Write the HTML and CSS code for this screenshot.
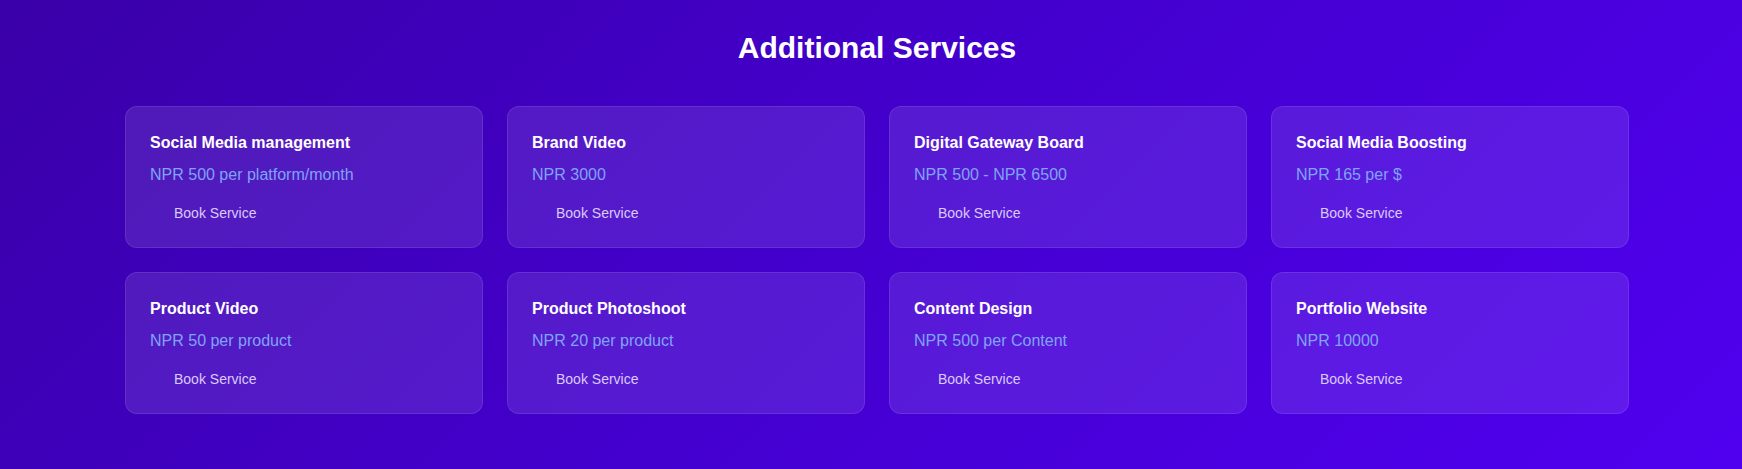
FILE: index.html
```html
<!DOCTYPE html>
<html lang="en">
<head>
<meta charset="utf-8">
<title>Additional Services</title>
<link rel="stylesheet" href="styles.css">
</head>
<body>
<section class="services">
  <h2 class="services-title">Additional Services</h2>
  <div class="services-grid">
    <div class="card">
      <h3 class="card-title">Social Media management</h3>
      <p class="card-price">NPR 500 per platform/month</p>
      <a class="card-btn">Book Service</a>
    </div>
    <div class="card">
      <h3 class="card-title">Brand Video</h3>
      <p class="card-price">NPR 3000</p>
      <a class="card-btn">Book Service</a>
    </div>
    <div class="card">
      <h3 class="card-title">Digital Gateway Board</h3>
      <p class="card-price">NPR 500 - NPR 6500</p>
      <a class="card-btn">Book Service</a>
    </div>
    <div class="card">
      <h3 class="card-title">Social Media Boosting</h3>
      <p class="card-price">NPR 165 per $</p>
      <a class="card-btn">Book Service</a>
    </div>
    <div class="card">
      <h3 class="card-title">Product Video</h3>
      <p class="card-price">NPR 50 per product</p>
      <a class="card-btn">Book Service</a>
    </div>
    <div class="card">
      <h3 class="card-title">Product Photoshoot</h3>
      <p class="card-price">NPR 20 per product</p>
      <a class="card-btn">Book Service</a>
    </div>
    <div class="card">
      <h3 class="card-title">Content Design</h3>
      <p class="card-price">NPR 500 per Content</p>
      <a class="card-btn">Book Service</a>
    </div>
    <div class="card">
      <h3 class="card-title">Portfolio Website</h3>
      <p class="card-price">NPR 10000</p>
      <a class="card-btn">Book Service</a>
    </div>
  </div>
</section>
</body>
</html>
```

FILE: styles.css
```css
* { box-sizing: border-box; }
html, body {
  margin: 0;
  padding: 0;
  height: 100%;
}
body {
  font-family: "Liberation Sans", Arial, sans-serif;
  background: linear-gradient(135deg, #3a00a8 0%, #4400cf 50%, #5000ef 100%);
  color: #ffffff;
  overflow: hidden;
}
.services {
  padding: 30px 113px 0 125px;
}
.services-title {
  margin: 0 0 40px;
  font-size: 30px;
  line-height: 36px;
  font-weight: 700;
  text-align: center;
}
.services-grid {
  display: grid;
  grid-template-columns: repeat(4, 1fr);
  gap: 24px;
}
.card {
  background: rgba(255, 255, 255, 0.1);
  border: 1px solid rgba(255, 255, 255, 0.1);
  border-radius: 12px;
  padding: 24px;
  display: flex;
  flex-direction: column;
  align-items: flex-start;
}
.card-title {
  margin: 0 0 8px;
  font-size: 16px;
  line-height: 24px;
  font-weight: 700;
  color: #ffffff;
}
.card-price {
  margin: 0;
  font-size: 16px;
  line-height: 24px;
  color: #7ea4f7;
}
.card-btn {
  margin-top: 16px;
  padding: 0 24px;
  font-size: 14px;
  line-height: 20px;
  color: #dacafc;
  cursor: pointer;
}
```
